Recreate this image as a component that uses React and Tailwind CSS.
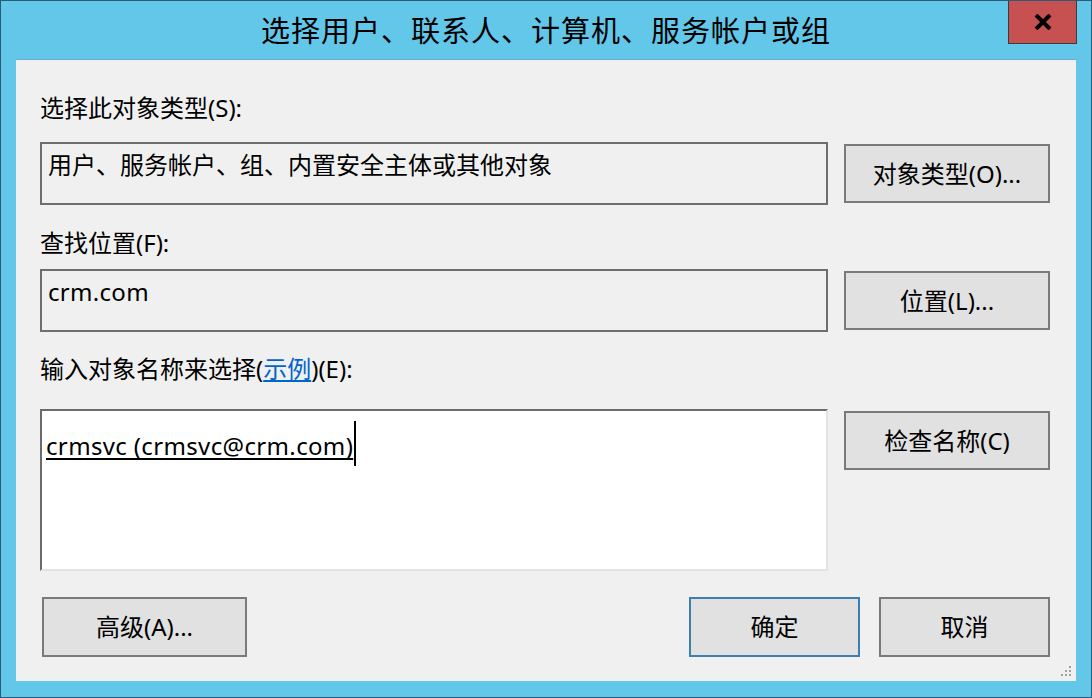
import React from "react";

const font = { fontFamily: '"Noto Sans", "Noto Sans CJK SC", sans-serif' };

const Btn = ({ children, focused }) => (
  <button
    className={
      focused
        ? "w-full h-full bg-[#e1e1e1] border-2 border-[#3c7fb1] text-[24px] text-black leading-none"
        : "w-full h-full bg-[#e1e1e1] border-2 border-[#7a7a7a] text-[24px] text-black leading-none"
    }
  >
    {children}
  </button>
);

export default function App() {
  return (
    <div
      className="w-[1092px] h-[698px] bg-[#63c7ea] border border-[#2a5c7a] flex flex-col relative overflow-hidden"
      style={font}
    >
      {/* title bar */}
      <div className="h-[58px] flex items-center justify-center text-[29px] text-black tracking-[1px] pt-[2px]">
        选择用户、联系人、计算机、服务帐户或组
      </div>
      <div className="absolute top-0 right-[14px] w-[69px] h-[43px] bg-[#c75050] border border-[#3b3b3b] border-t-0 flex items-center justify-center">
        <svg width="18" height="16" viewBox="0 0 18 16">
          <path d="M2 1 L16 15 M16 1 L2 15" stroke="#000" strokeWidth="4" />
        </svg>
      </div>

      {/* client area */}
      <div className="ml-[15px] mr-[15px] h-[622px] bg-[#f0f0f0] border-t border-[#6fa9cc] relative pl-[24px] pr-[26px] text-black text-[24px]">
        <div className="mt-[34px] h-[28px] flex items-center">选择此对象类型(S):</div>

        <div className="mt-[20px] flex gap-[16px] items-center">
          <div className="w-[788px] h-[63px] border-2 border-[#6e6e6e] px-[6px] pt-[5px] leading-[32px]">
            用户、服务帐户、组、内置安全主体或其他对象
          </div>
          <div className="w-[206px] h-[59px]">
            <Btn>对象类型(O)...</Btn>
          </div>
        </div>

        <div className="mt-[24px] h-[28px] flex items-center">查找位置(F):</div>

        <div className="mt-[12px] flex gap-[16px] items-center">
          <div className="w-[788px] h-[63px] border-2 border-[#6e6e6e] px-[6px] pt-[5px] leading-[32px] tracking-[0.3px]">
            crm.com
          </div>
          <div className="w-[206px] h-[59px]">
            <Btn>位置(L)...</Btn>
          </div>
        </div>

        <div className="mt-[23px] h-[28px] flex items-center">
          输入对象名称来选择(
          <span className="text-[#0066cc] underline underline-offset-2">示例</span>
          )(E):
        </div>

        <div className="mt-[26px] flex gap-[16px] items-start">
          <div className="w-[788px] h-[162px] bg-white border-2 border-t-[#6b6b6b] border-l-[#6b6b6b] border-r-[#e3e3e3] border-b-[#e3e3e3] pl-[4px] pt-[14px] leading-[32px]">
            <span className="inline-flex items-center">
              <span className="underline underline-offset-[3px] decoration-2 [text-decoration-skip-ink:none] tracking-[0.35px]">crmsvc (crmsvc@crm.com)</span>
              <span className="inline-block w-[2px] h-[45px] bg-black ml-[1px] -mt-[4px]"></span>
            </span>
          </div>
          <div className="w-[206px] h-[59px] mt-[2px]">
            <Btn>检查名称(C)</Btn>
          </div>
        </div>

        <div className="mt-[26px] flex items-center">
          <div className="w-[205px] h-[60px] ml-[2px]">
            <Btn>高级(A)...</Btn>
          </div>
          <div className="w-[171px] h-[60px] ml-auto">
            <Btn focused>确定</Btn>
          </div>
          <div className="w-[171px] h-[60px] ml-[19px] mr-0">
            <Btn>取消</Btn>
          </div>
        </div>

        {/* resize grip */}
        <svg className="absolute right-[4px] bottom-[4px]" width="14" height="14" viewBox="0 0 14 14">
          <g fill="#a0a0a0">
            <rect x="11" y="3" width="2" height="2" />
            <rect x="7" y="7" width="2" height="2" />
            <rect x="11" y="7" width="2" height="2" />
            <rect x="3" y="11" width="2" height="2" />
            <rect x="7" y="11" width="2" height="2" />
            <rect x="11" y="11" width="2" height="2" />
          </g>
        </svg>
      </div>
    </div>
  );
}
